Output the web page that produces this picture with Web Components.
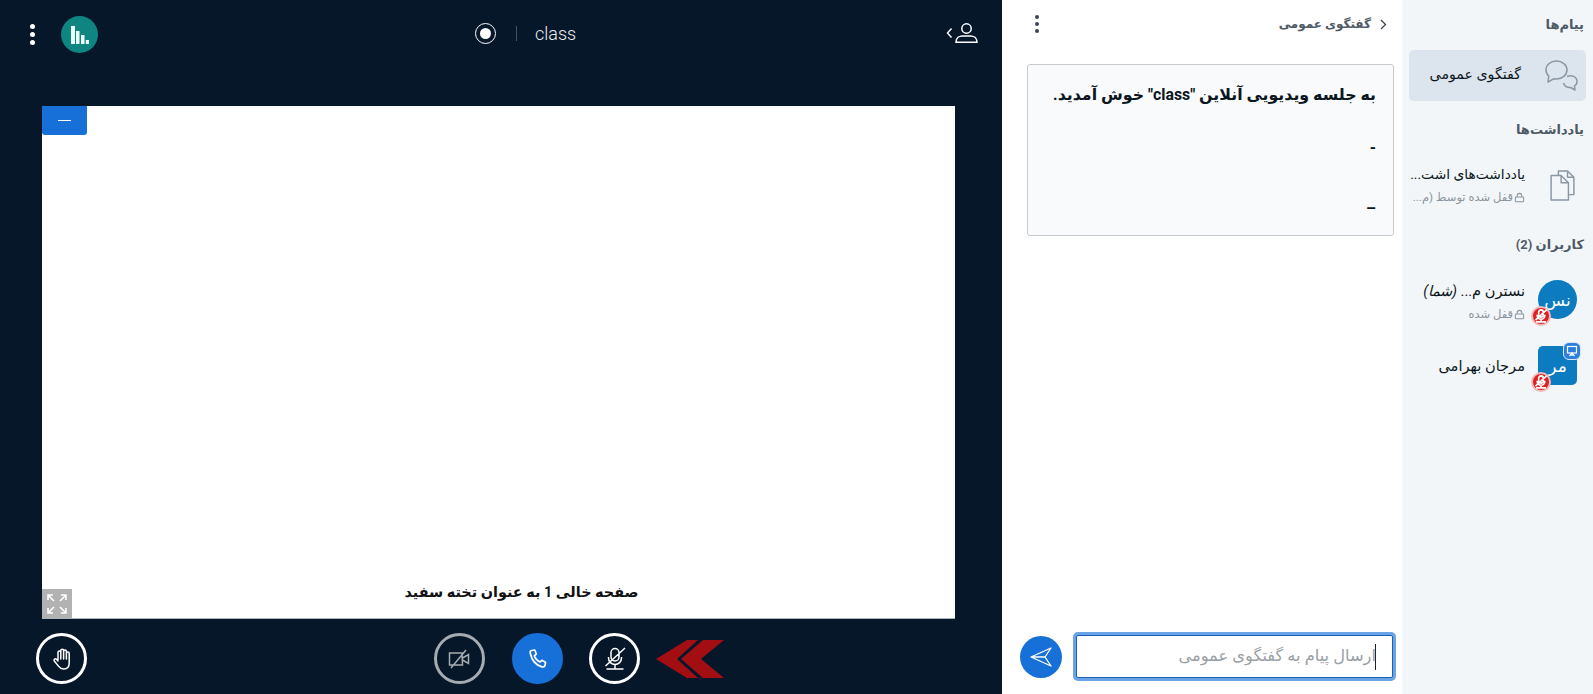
<!DOCTYPE html>
<html lang="fa">
<head>
<meta charset="utf-8">
<title>class</title>
<style>
  html, body { margin: 0; padding: 0; height: 100%; overflow: hidden; }
  body { font-family: Roboto, "DejaVu Sans", sans-serif; }
</style>
</head>
<body>
<app-shell>
  <main-stage slot="main"></main-stage>
  <chat-panel slot="chat"></chat-panel>
  <side-bar slot="side"></side-bar>
</app-shell>

<script>
// Shared icon strings
const ICONS = {
  mutedMic: `<path d="M12 1.500a4 4 0 0 1 4 4V10a4 4 0 0 1-8 0V5.500a4 4 0 0 1 4-4zM5.500 10v1a6.500 6.500 0 0 0 13 0v-1M12 17.500V22M3.500 22h17M2.500 19 22 1"/>`,
  lock: `<svg viewBox="0 0 12 12" width="11" height="11" fill="none" stroke="currentColor" stroke-width="1.100"><rect x="1.500" y="5.500" width="9" height="5.200" rx="1"/><path d="M3.500 5.500V4a2.500 2.500 0 0 1 5 0v1.500"/></svg>`,
};
const FONT = 'Roboto, "DejaVu Sans", sans-serif';

class AppShell extends HTMLElement {
  constructor() {
    super();
    this.attachShadow({ mode: 'open' });
    this.shadowRoot.innerHTML = `
      <style>
        :host { display: grid; grid-template-columns: 1002px 400px 191px; height: 694px; width: 1593px; }
      </style>
      <slot name="main"></slot>
      <slot name="chat"></slot>
      <slot name="side"></slot>
    `;
  }
}

class MainStage extends HTMLElement {
  constructor() {
    super();
    this.attachShadow({ mode: 'open' });
    this.shadowRoot.innerHTML = `
      <style>
        :host { display: grid; grid-template-rows: 66px 1fr 75px; background: #06172a; height: 694px; }
        .media { padding: 40px 47px 0 42px; display: flex; }
      </style>
      <top-nav></top-nav>
      <div class="media"><white-board></white-board></div>
      <action-bar></action-bar>
    `;
  }
}

class TopNav extends HTMLElement {
  constructor() {
    super();
    this.attachShadow({ mode: 'open' });
    this.shadowRoot.innerHTML = `
      <style>
        :host { display: flex; align-items: center; color: #fff; padding: 3px 24px 0 28px; box-sizing: border-box; height: 66px; }
        .kebab { width: 8px; display: flex; flex-direction: column; gap: 3px; align-items: center; }
        .kebab i { width: 5px; height: 5px; border-radius: 50%; background: #fff; }
        .poll { width: 37px; height: 37px; border-radius: 50%; background: #0f8582; margin-left: 25px; display: flex; align-items: center; justify-content: center; }
        .center { display: flex; align-items: center; margin-left: 377px; margin-top: -3px; }
        .rec { width: 21px; height: 21px; border: 1.500px solid #fff; border-radius: 50%; box-sizing: border-box; display: flex; align-items: center; justify-content: center; }
        .rec i { width: 11px; height: 11px; background: #fff; border-radius: 50%; }
        .sep { width: 1px; height: 15px; background: #44515f; margin: 0 18px 0 20px; }
        .title { font: 300 18px Roboto, sans-serif; color: #e8ecf0; }
        .user { margin-left: auto; display: flex; align-items: center; gap: 2px; margin-top: -4px; }
      </style>
      <div class="kebab"><i></i><i></i><i></i></div>
      <div class="poll">
        <svg width="18" height="18" viewBox="0 0 18 18" fill="#eafffd"><rect x="0" y="0" width="4" height="18"/><rect x="5" y="5" width="3.500" height="13"/><rect x="10" y="9" width="3.500" height="9"/><rect x="14.800" y="14" width="3.200" height="4"/></svg>
      </div>
      <div class="center">
        <div class="rec"><i></i></div>
        <div class="sep"></div>
        <div class="title">class</div>
      </div>
      <div class="user">
        <svg width="7" height="12" viewBox="0 0 7 12" fill="none" stroke="#fff" stroke-width="1.400"><path d="M5.500 1.500 1.500 6l4 4.500"/></svg>
        <svg width="23" height="20" viewBox="0 0 23 20" fill="none" stroke="#fff" stroke-width="1.500"><circle cx="11.500" cy="5.500" r="4.700"/><path d="M1 19.200c0-4.400 3.500-6.200 6.500-6.200h8c3 0 6.500 1.800 6.500 6.200z"/></svg>
      </div>
    `;
  }
}

class WhiteBoard extends HTMLElement {
  constructor() {
    super();
    this.attachShadow({ mode: 'open' });
    this.shadowRoot.innerHTML = `
      <style>
        :host { display: flex; flex: 1; position: relative; background: #fff; border-bottom: 1px solid #a9b3bc; flex-direction: column; justify-content: flex-end; align-items: center; box-sizing: border-box; height: 513px; }
        .caption { direction: rtl; font: 700 14.400px ${FONT}; color: #111; margin-bottom: 17px; margin-left: 46px; }
        .min { position: absolute; left: 0; top: 0; width: 45px; height: 29px; background: #1670d8; border-radius: 0 0 3px 3px; display: flex; align-items: center; justify-content: center; }
        .min i { width: 13px; height: 1.500px; background: #fff; }
        .expand { position: absolute; left: 0; bottom: 0; width: 30px; height: 29px; background: #b2b2b2; display: flex; align-items: center; justify-content: center; }
      </style>
      <div class="min"><i></i></div>
      <div class="caption">صفحه خالی 1 به عنوان تخته سفید</div>
      <div class="expand">
        <svg width="20" height="20" viewBox="0 0 20 20" fill="none" stroke="#fff" stroke-width="1.600"><path d="M1 6V1h5M1 1l6 6M14 1h5v5M19 1l-6 6M1 14v5h5M1 19l6-6M14 19h5v-5M19 19l-6-6"/></svg>
      </div>
    `;
  }
}

class RoundButton extends HTMLElement {
  constructor() {
    super();
    this.attachShadow({ mode: 'open' });
    this.shadowRoot.innerHTML = `
      <style>
        :host { display: flex; width: 51px; height: 51px; box-sizing: border-box; border: 3px solid var(--ring, #fff); border-radius: 50%; align-items: center; justify-content: center; background: var(--fill, transparent); }
      </style>
      <slot></slot>
    `;
  }
}

class ActionBar extends HTMLElement {
  constructor() {
    super();
    this.attachShadow({ mode: 'open' });
    this.shadowRoot.innerHTML = `
      <style>
        :host { display: flex; align-items: flex-start; padding: 14px 0 0 36px; box-sizing: border-box; height: 75px; }
        .group { display: flex; gap: 26.500px; margin-left: 347px; align-items: center; }
        .arrows { margin-left: -11px; }
        .gray { --ring: #a5abb1; }
        .blue { --ring: #1670d8; --fill: #1670d8; }
      </style>
      <round-button>
        <svg width="24" height="24" viewBox="0 0 24 24" fill="none" stroke="#fff" stroke-width="1.500" stroke-linecap="round" stroke-linejoin="round"><path d="M8 13V5.500a1.400 1.400 0 0 1 2.800 0V12M10.800 12V3.600a1.400 1.400 0 0 1 2.800 0V12M13.600 12V4.400a1.400 1.400 0 0 1 2.800 0V12M16.400 12V6.500a1.400 1.400 0 0 1 2.800 0V16c0 4-2.300 6-5.500 6-2.400 0-3.800-.9-5-2.600L4.300 14c-.9-1.400.9-2.900 2.200-1.700L8 14"/></svg>
      </round-button>
      <div class="group">
        <round-button class="gray">
          <svg width="26" height="24" viewBox="0 0 26 24" fill="none" stroke="#a5abb1" stroke-width="1.500"><path d="M15 6H2.500v12h13zM15.500 11l6-3.500v9l-6-3.500M4 21 19 3"/></svg>
        </round-button>
        <round-button class="blue">
          <svg width="24" height="24" viewBox="0 0 24 24" fill="none" stroke="#fff" stroke-width="1.700" stroke-linejoin="round"><path d="M6.500 3.500 9.800 3l1.500 4-2 1.800c.8 2.400 3 4.900 5.600 6.200l2-1.700 3.600 2-.5 3c-.3 1.300-1.700 2-3 1.600C11 18.200 6.800 13.500 5.200 6c-.2-1.200.3-2.200 1.300-2.500z"/></svg>
        </round-button>
        <round-button>
          <svg width="24" height="24" viewBox="0 0 24 24" fill="none" stroke="#fff" stroke-width="1.500">${ICONS.mutedMic}</svg>
        </round-button>
        <svg class="arrows" width="68" height="38" viewBox="0 0 68 38"><path fill="#a30e13" d="M0 19 31 0h11L21 19l21 19H31z"/><path fill="#a30e13" d="M25 19 47 0h21L45 19l23 19H47z"/></svg>
      </div>
    `;
  }
}

class ChatPanel extends HTMLElement {
  constructor() {
    super();
    this.attachShadow({ mode: 'open' });
    this.shadowRoot.innerHTML = `
      <style>
        :host { display: flex; flex-direction: column; background: #fff; height: 694px; box-sizing: border-box; padding: 0 8px 16px 25px; }
        .head { height: 64px; display: flex; align-items: flex-start; justify-content: space-between; padding: 15px 7px 0 8px; box-sizing: border-box; }
        .kebab { display: flex; flex-direction: column; gap: 3px; }
        .kebab i { width: 4px; height: 4px; background: #3a4652; border-radius: 50%; }
        .title { display: flex; align-items: center; gap: 9px; direction: rtl; font: 700 12px ${FONT}; color: #4e5a66; margin-top: 2px; }
        .box { height: 172px; box-sizing: border-box; border: 1px solid #c7cbcf; border-radius: 3px; background: #f9fafc; direction: rtl; padding: 16px 17px; color: #0b1620; font: 700 15.800px ${FONT}; }
        .box div { line-height: 28px; }
        .box .a { height: 53px; }
        .box .b { height: 61px; }
        .spacer { flex: 1; }
        .compose { display: flex; align-items: center; justify-content: space-between; margin: 0 1px 0 -7px; }
        .send { width: 42px; height: 42px; border-radius: 50%; background: #1670d8; display: flex; align-items: center; justify-content: center; }
        .input { width: 317px; height: 43px; box-sizing: border-box; border: 1px solid #1b5fae; box-shadow: 0 0 0 3px #6aa4e6; border-radius: 2px; direction: rtl; display: flex; align-items: center; padding: 0 16px 3px; color: #9a9fa5; font: 400 16.300px ${FONT}; background: #fff; }
        .input::before { content: ""; width: 1px; height: 26px; background: #222; margin-left: -1px; margin-bottom: -3px; }
      </style>
      <div class="head">
        <div class="kebab"><i></i><i></i><i></i></div>
        <div class="title">
          <svg width="7" height="11" viewBox="0 0 7 11" fill="none" stroke="#3a4652" stroke-width="1.300"><path d="M1 1l4.500 4.500L1 10"/></svg>
          <span>گفتگوی عمومی</span>
        </div>
      </div>
      <div class="box">
        <div class="a">به جلسه ویدیویی آنلاین "class" خوش آمدید.</div>
        <div class="b">-</div>
        <div>–</div>
      </div>
      <div class="spacer"></div>
      <div class="compose">
        <div class="send">
          <svg width="22" height="20" viewBox="0 0 22 20" fill="none" stroke="#fff" stroke-width="1.300" stroke-linejoin="round"><path d="M1 10 21 1l-6 9 6 9zM1 10h14"/></svg>
        </div>
        <div class="input">ارسال پیام به گفتگوی عمومی</div>
      </div>
    `;
  }
}

class SideBadge extends HTMLElement {
  constructor() {
    super();
    this.attachShadow({ mode: 'open' });
    this.shadowRoot.innerHTML = `
      <style>
        :host { position: absolute; left: -7px; bottom: -7px; width: 20px; height: 20px; box-sizing: border-box; border-radius: 50%; background: #dd2020; border: 2px solid #f0b8b8; display: flex; align-items: center; justify-content: center; }
      </style>
      <svg width="14" height="14" viewBox="0 0 24 24" fill="none" stroke="#fff" stroke-width="2.800">${ICONS.mutedMic}</svg>
    `;
  }
}

class UserRow extends HTMLElement {
  constructor() {
    super();
    this.attachShadow({ mode: 'open' });
    const square = this.hasAttribute('presenter');
    const hasSub = this.hasAttribute('sub');
    this.shadowRoot.innerHTML = `
      <style>
        :host { display: flex; align-items: ${hasSub ? 'flex-start' : 'center'}; gap: 13px; padding-right: 16px; direction: rtl; height: 39px; }
        .avatar { position: relative; width: 39px; height: 39px; flex: none; background: #0c7bbf; color: #fff; border-radius: ${square ? '5px' : '50%'}; display: flex; align-items: center; justify-content: center; font: 400 17px ${FONT}; }
        .pres { position: absolute; right: -4px; top: -4px; width: 18px; height: 18px; box-sizing: border-box; background: #2b7fdc; border: 1.500px solid #dce9f8; border-radius: 6px; display: flex; align-items: center; justify-content: center; }
        .name { font: 400 14.600px ${FONT}; color: #0b1620; margin-top: ${hasSub ? '2px' : '0'}; white-space: nowrap; }
        .sub { display: flex; align-items: center; gap: 1px; font: 400 11.500px ${FONT}; color: #8b949c; margin-top: 7px; white-space: nowrap; }
      </style>
      <div class="avatar">
        ${this.getAttribute('initials')}
        ${square ? '<div class="pres"><svg width="12" height="12" viewBox="0 0 12 12" fill="none" stroke="#fff" stroke-width="1.200"><rect x="1.500" y="1.500" width="9" height="6.500"/><path d="M6 8v3M3.500 11 6 8l2.500 3"/></svg></div>' : ''}
        <side-badge></side-badge>
      </div>
      <div>
        <div class="name"><slot></slot></div>
        ${hasSub ? `<div class="sub">${ICONS.lock}<span>${this.getAttribute('sub')}</span></div>` : ''}
      </div>
    `;
  }
}

class SideBar extends HTMLElement {
  constructor() {
    super();
    this.attachShadow({ mode: 'open' });
    this.shadowRoot.innerHTML = `
      <style>
        :host { display: block; background: #f3f6f9; height: 694px; direction: rtl; font-family: ${FONT}; }
        h2 { margin: 0; padding-right: 9px; font-size: 13px; font-weight: 700; color: #4e5a66; line-height: 18px; }
        .active { margin: 16px 7px 0 7px; height: 51px; background: #dce4ed; border-radius: 5px; display: flex; align-items: center; padding-right: 8px; gap: 24px; color: #0b1620; font-size: 14.200px; }
        .active span { margin-top: -3px; }
        .notes { display: flex; gap: 25px; padding-right: 18px; margin-top: 29px; height: 42px; align-items: flex-start; }
        .notes .t { font-size: 13.800px; color: #0b1620; white-space: nowrap; margin-top: -2px; }
        .notes .s { display: flex; align-items: center; gap: 1px; font-size: 11.500px; color: #8b949c; margin-top: 8px; white-space: nowrap; }
        .users { display: flex; flex-direction: column; gap: 27px; margin-top: 26px; }
        .h1 { padding-top: 16px; }
        .h2 { margin-top: 20px; }
        .h3 { margin-top: 26px; }
      </style>
      <h2 class="h1">پیام‌ها</h2>
      <div class="active">
        <svg width="33" height="31" viewBox="0 0 33 31" fill="none" stroke="#8a97a4" stroke-width="1.500" stroke-linejoin="round"><path d="M11.500 1C5.700 1 1 4.800 1 10c0 2.500 1 4.500 2.800 6L3 22l6-3.300c.8.2 1.600.3 2.500.3 5.800 0 10.500-4 10.500-9S17.300 1 11.500 1z"/><path d="M22 16.500c4-1.500 10-.5 10 5 0 2-1 3.500-2.500 4.300L30 30l-4.500-2.500c-3 .2-6-1-7-4.500"/></svg>
        <span>گفتگوی عمومی</span>
      </div>
      <h2 class="h2">یادداشت‌ها</h2>
      <div class="notes">
        <svg width="25" height="31" viewBox="0 0 27 34" fill="none" stroke="#8a97a4" stroke-width="1.600" stroke-linejoin="round" style="flex:none;margin-top:2px"><path d="M9 6V1h10l7 7v19h-6"/><path d="M1 6h11l8 8v19H1z"/><path d="M12 6v8h8M19 1v7h7"/></svg>
        <div>
          <div class="t">یادداشت‌های اشت...</div>
          <div class="s">${ICONS.lock}<span>قفل شده توسط (م...</span></div>
        </div>
      </div>
      <h2 class="h3">کاربران (2)</h2>
      <div class="users">
        <user-row initials="نس" sub="قفل شده">نسترن م... <em>(شما)</em></user-row>
        <user-row initials="مر" presenter>مرجان بهرامی</user-row>
      </div>
    `;
  }
}

customElements.define('app-shell', AppShell);
customElements.define('main-stage', MainStage);
customElements.define('top-nav', TopNav);
customElements.define('white-board', WhiteBoard);
customElements.define('round-button', RoundButton);
customElements.define('action-bar', ActionBar);
customElements.define('chat-panel', ChatPanel);
customElements.define('side-badge', SideBadge);
customElements.define('user-row', UserRow);
customElements.define('side-bar', SideBar);
</script>
</body>
</html>
